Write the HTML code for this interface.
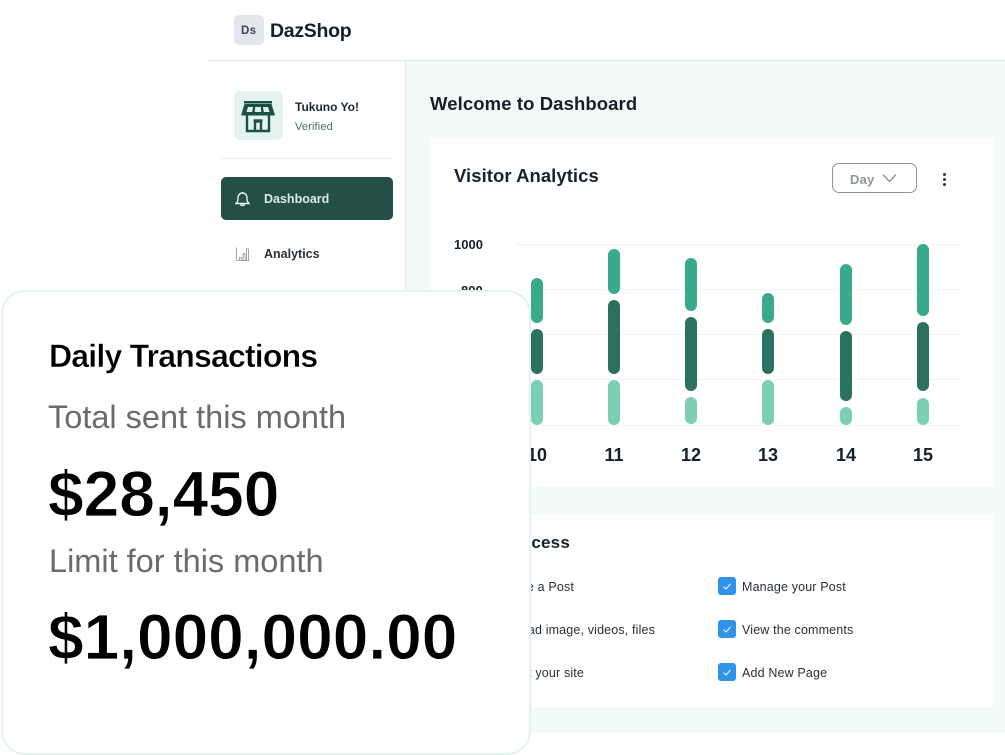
<!DOCTYPE html>
<html><head><meta charset="utf-8"><style>
html,body{margin:0;padding:0;background:#fff}
#p{position:relative;width:1005px;height:755px;overflow:hidden;background:#fff;font-family:"Liberation Sans",sans-serif}
#p div{position:absolute}
.t{white-space:nowrap;line-height:1}
.b{width:12px;border-radius:6px}
.a{background:#3aaa8c}.d{background:#2a725f}.l{background:#7bcfb4}
.g{left:516px;width:444px;height:1px;background:#eef5f3}
.x{font-size:18px;font-weight:700;color:#16202a;width:40px;text-align:center;top:446px}
.c{width:18px;height:18px;border-radius:3px;background:#2f93ea;left:718px}
.c svg{position:absolute;left:0;top:0}
.i{font-size:12.5px;color:#2a2f3a;letter-spacing:.15px}
.o{color:#000;font-weight:700;-webkit-text-stroke:.8px #fff}
</style></head><body><div id="p">
<div style="left:209px;top:60px;width:796px;height:1px;background:#e3e7e8"></div>
<div style="left:405px;top:61px;width:1px;height:240px;background:#e3e7e8"></div>
<div style="left:406px;top:61px;width:599px;height:672px;background:#f3fbf9"></div>
<div style="left:234px;top:15px;width:30px;height:30px;border-radius:5px;background:#e3e6ea"></div>
<div class="t" style="left:241px;top:26px;font-size:11.5px;font-weight:700;color:#3c4650;letter-spacing:.3px">Ds</div>
<div class="t" style="left:270px;top:22px;font-size:19.500px;font-weight:700;color:#16202a;letter-spacing:-.3px">DazShop</div>
<div style="left:234px;top:91px;width:49px;height:49px;border-radius:6px;background:#e3f4f0"></div>
<svg style="position:absolute;left:240px;top:100px" width="36" height="34" viewBox="0 0 36 34"><rect x="4" y="1" width="28" height="2.500" fill="#1c4f45"/><path d="M4.500 4h27l3.500 11.500H1z" fill="#1c4f45"/><path d="M8 7h5l-.8 5H6.500zM15.200 7h5.600l.4 5h-6.400zM23 7h5l1.500 5h-5.700z" fill="#e3f4f0"/><path d="M7 15v16h22V15M15 31V21.500h6V31" fill="none" stroke="#1c4f45" stroke-width="2.400"/><path d="M13.500 20.500h9" stroke="#1c4f45" stroke-width="2.400"/></svg>
<div class="t" style="left:295px;top:101px;font-size:12px;font-weight:700;color:#1f2730">Tukuno Yo!</div>
<div class="t" style="left:295px;top:122px;font-size:11px;color:#4a6a63;letter-spacing:.15px">Verified</div>
<div style="left:221px;top:158px;width:171px;height:1px;background:#e8eeed"></div>
<div style="left:221px;top:177px;width:172px;height:43px;border-radius:5px;background:#234f47"></div>
<svg style="position:absolute;left:235px;top:191px" width="15" height="16" viewBox="0 0 15 16" fill="none" stroke="#e8f2ef" stroke-width="1.400"><path d="M1 12.500c1.500-1.500 2-2.500 2-5.500 0-3 2-5 4.500-5S12 4 12 7c0 3 .5 4 2 5.500zM5.500 13c0 2 4 2 4 0M7.500 1v1"/></svg>
<div class="t" style="left:264px;top:193px;font-size:12.5px;font-weight:700;color:#dcebe7">Dashboard</div>
<svg style="position:absolute;left:235px;top:246px" width="16" height="16" viewBox="0 0 16 16" fill="none" stroke="#8c8f92" stroke-width=".8"><path d="M1.500 1.500v13h13"/><path d="M4.500 14.500v-3h2v3M8 14.500V7.500h2v7M11.500 14.500V3h2v11.500"/></svg>
<div class="t" style="left:264px;top:248px;font-size:12.5px;font-weight:700;color:#2a3138">Analytics</div>
<div class="t" style="left:430px;top:95px;font-size:18.500px;font-weight:700;color:#16202a;letter-spacing:.1px">Welcome to Dashboard</div>
<div style="left:430px;top:138px;width:563px;height:349px;background:#fff"></div>
<div style="left:430px;top:514px;width:563px;height:193px;background:#fff"></div>
<div class="t" style="left:454px;top:167px;font-size:18.500px;font-weight:700;color:#1a222c;letter-spacing:.05px">Visitor Analytics</div>
<div style="left:832px;top:163px;width:83px;height:28px;border:1.500px solid #8f9496;border-radius:7px"></div>
<div class="t" style="left:850px;top:173px;font-size:13px;font-weight:700;color:#8f9496;letter-spacing:.2px">Day</div>
<svg style="position:absolute;left:882px;top:173px" width="15" height="11" viewBox="0 0 15 11" fill="none" stroke="#8f9496" stroke-width="1.300"><path d="M1 1.500l6.500 7 6.500-7"/></svg>
<div style="left:943px;top:173px;width:3px;height:3px;border-radius:2px;background:#333"></div>
<div style="left:943px;top:178px;width:3px;height:3px;border-radius:2px;background:#333"></div>
<div style="left:943px;top:183px;width:3px;height:3px;border-radius:2px;background:#333"></div>
<div class="t" style="left:454px;top:238px;font-size:13px;font-weight:700;color:#16202a">1000</div>
<div class="t" style="left:461px;top:284px;font-size:13px;font-weight:700;color:#16202a">800</div>
<div class="g" style="top:244px"></div><div class="g" style="top:289px"></div><div class="g" style="top:334px"></div><div class="g" style="top:379px"></div><div class="g" style="top:425px"></div>
<div class="b a" style="left:531px;top:278px;height:45px"></div><div class="b d" style="left:531px;top:329px;height:45px"></div><div class="b l" style="left:531px;top:380px;height:45px"></div>
<div class="b a" style="left:608px;top:249px;height:45px"></div><div class="b d" style="left:608px;top:300px;height:74px"></div><div class="b l" style="left:608px;top:380px;height:45px"></div>
<div class="b a" style="left:685px;top:258px;height:53px"></div><div class="b d" style="left:685px;top:317px;height:74px"></div><div class="b l" style="left:685px;top:397px;height:27px"></div>
<div class="b a" style="left:762px;top:293px;height:30px"></div><div class="b d" style="left:762px;top:329px;height:45px"></div><div class="b l" style="left:762px;top:380px;height:45px"></div>
<div class="b a" style="left:840px;top:264px;height:61px"></div><div class="b d" style="left:840px;top:331px;height:70px"></div><div class="b l" style="left:840px;top:407px;height:18px"></div>
<div class="b a" style="left:917px;top:244px;height:72px"></div><div class="b d" style="left:917px;top:322px;height:69px"></div><div class="b l" style="left:917px;top:398px;height:27px"></div>
<div class="t x" style="left:517px">10</div><div class="t x" style="left:594px">11</div><div class="t x" style="left:671px">12</div><div class="t x" style="left:748px">13</div><div class="t x" style="left:826px">14</div><div class="t x" style="left:903px">15</div>
<div class="t" style="left:430px;top:534px;font-size:17px;font-weight:700;color:#16202a;letter-spacing:.2px;width:140px;text-align:right">Quick Access</div>
<div class="t i" style="left:400px;width:174px;text-align:right;top:581px">Create a Post</div>
<div class="t i" style="left:400px;width:255px;text-align:right;top:624px">Upload image, videos, files</div>
<div class="t i" style="left:400px;width:184px;text-align:right;top:667px">Visit your site</div>
<div class="c" style="top:577px"><svg width="18" height="18" fill="none" stroke="#fff" stroke-width="1"><path d="M5.500 9.500l2.500 2.500 4.500-5"/></svg></div>
<div class="c" style="top:620px"><svg width="18" height="18" fill="none" stroke="#fff" stroke-width="1"><path d="M5.500 9.500l2.500 2.500 4.500-5"/></svg></div>
<div class="c" style="top:663px"><svg width="18" height="18" fill="none" stroke="#fff" stroke-width="1"><path d="M5.500 9.500l2.500 2.500 4.500-5"/></svg></div>
<div class="t i" style="left:742px;top:581px">Manage your Post</div>
<div class="t i" style="left:742px;top:624px">View the comments</div>
<div class="t i" style="left:742px;top:667px">Add New Page</div>
<div style="left:1px;top:290px;width:526px;height:461px;background:#fff;border:2px solid #e4f3ef;border-radius:24px"></div>
<div class="t o" style="left:49px;top:340px;font-size:32px;letter-spacing:-.8px;-webkit-text-stroke:.4px #fff">Daily Transactions</div>
<div class="t" style="left:48px;top:401px;font-size:32.500px;color:#6b6b6e">Total sent this month</div>
<div class="t o" style="left:48px;top:462px;font-size:64px">$28,450</div>
<div class="t" style="left:49px;top:545px;font-size:32.500px;color:#6b6b6e">Limit for this month</div>
<div class="t o" style="left:48px;top:605px;font-size:64px">$1,000,000.00</div>
</div></body></html>
